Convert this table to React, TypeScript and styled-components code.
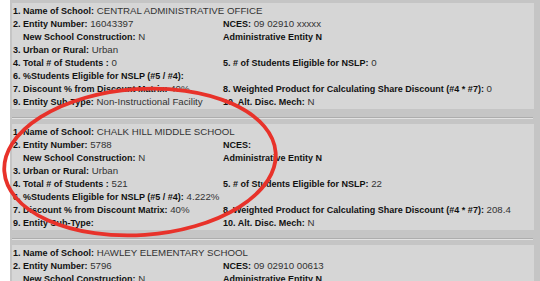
import React from "react";
import styled, { createGlobalStyle } from "styled-components";

const GlobalStyle = createGlobalStyle`
  html, body {
    margin: 0;
    padding: 0;
    background: #ffffff;
    overflow: hidden;
  }
`;

type Field = { label: string; value?: string; indent?: boolean };
type Row = { left: Field; right?: Field; wide?: boolean };
type Entity = { rows: Row[] };

const entities: Entity[] = [
  {
    rows: [
      { left: { label: "1. Name of School:", value: "CENTRAL ADMINISTRATIVE OFFICE" }, wide: true },
      { left: { label: "2. Entity Number:", value: "16043397" }, right: { label: "NCES:", value: "09 02910 xxxxx" } },
      { left: { label: "New School Construction:", value: "N", indent: true }, right: { label: "Administrative Entity N" } },
      { left: { label: "3. Urban or Rural:", value: "Urban" } },
      { left: { label: "4. Total # of Students :", value: "0" }, right: { label: "5. # of Students Eligible for NSLP:", value: "0" } },
      { left: { label: "6. %Students Eligible for NSLP (#5 / #4):" }, wide: true },
      { left: { label: "7. Discount % from Discount Matrix:", value: "40%" }, right: { label: "8. Weighted Product for Calculating Share Discount (#4 * #7):", value: "0" } },
      { left: { label: "9. Entity Sub-Type:", value: "Non-Instructional Facility" }, right: { label: "10. Alt. Disc. Mech:", value: "N" } },
    ],
  },
  {
    rows: [
      { left: { label: "1. Name of School:", value: "CHALK HILL MIDDLE SCHOOL" }, wide: true },
      { left: { label: "2. Entity Number:", value: "5788" }, right: { label: "NCES:" } },
      { left: { label: "New School Construction:", value: "N", indent: true }, right: { label: "Administrative Entity N" } },
      { left: { label: "3. Urban or Rural:", value: "Urban" } },
      { left: { label: "4. Total # of Students :", value: "521" }, right: { label: "5. # of Students Eligible for NSLP:", value: "22" } },
      { left: { label: "6. %Students Eligible for NSLP (#5 / #4):", value: "4.222%" }, wide: true },
      { left: { label: "7. Discount % from Discount Matrix:", value: "40%" }, right: { label: "8. Weighted Product for Calculating Share Discount (#4 * #7):", value: "208.4" } },
      { left: { label: "9. Entity Sub-Type:" }, right: { label: "10. Alt. Disc. Mech:", value: "N" } },
    ],
  },
  {
    rows: [
      { left: { label: "1. Name of School:", value: "HAWLEY ELEMENTARY SCHOOL" }, wide: true },
      { left: { label: "2. Entity Number:", value: "5796" }, right: { label: "NCES:", value: "09 02910 00613" } },
      { left: { label: "New School Construction:", value: "N", indent: true }, right: { label: "Administrative Entity N" } },
    ],
  },
];

const Page = styled.div`
  position: relative;
  padding-left: 10px;
  height: 281px;
  overflow: hidden;
`;

const Panel = styled.div`
  background: #c5c5c5;
  padding: 3px 6px 0 2px;
  min-height: 100%;
  font-family: "Liberation Sans", Arial, sans-serif;
  font-size: 9.7px;
  color: #333;
`;

const Card = styled.div`
  background: #d6d6d6;
  padding: 1px 0 1px 1px;
`;

const Line = styled.div<{ $wide?: boolean }>`
  display: grid;
  grid-template-columns: ${(p) => (p.$wide ? "1fr" : "210px 1fr")};
  height: 13px;
  line-height: 13px;
  white-space: nowrap;
`;

const Cell = styled.div<{ $indent?: boolean }>`
  padding-left: ${(p) => (p.$indent ? "10px" : "0")};
`;

const Label = styled.span`
  font-weight: 700;
  font-size: 9px;
  color: #111;
`;

const Separator = styled.div`
  padding: 8px 0 5px;
`;

const Rule = styled.div`
  height: 0;
  border-top: 1px solid #adadad;
  border-bottom: 1px solid #e2e2e2;
  margin-right: 1px;
`;

const Annotation = styled.svg`
  position: absolute;
  left: 0;
  top: 0;
  pointer-events: none;
`;

const FieldText = ({ f }: { f?: Field }) =>
  f ? (
    <Cell $indent={f.indent}>
      <Label>{f.label}</Label>
      {f.value ? ` ${f.value}` : ""}
    </Cell>
  ) : (
    <Cell />
  );

export default function App() {
  return (
    <>
      <GlobalStyle />
      <Page>
        <Panel>
          {entities.map((e, i) => (
            <React.Fragment key={i}>
              {i > 0 && (
                <Separator>
                  <Rule />
                </Separator>
              )}
              <Card>
                {e.rows.map((r, j) => (
                  <Line key={j} $wide={r.wide}>
                    <FieldText f={r.left} />
                    {!r.wide && <FieldText f={r.right} />}
                  </Line>
                ))}
              </Card>
            </React.Fragment>
          ))}
        </Panel>
        <Annotation width="540" height="281" viewBox="0 0 540 281">
          <ellipse
            cx="140"
            cy="162"
            rx="136"
            ry="73"
            transform="rotate(-4 140 162)"
            fill="none"
            stroke="#e8322a"
            strokeWidth="3.8"
          />
        </Annotation>
      </Page>
    </>
  );
}
